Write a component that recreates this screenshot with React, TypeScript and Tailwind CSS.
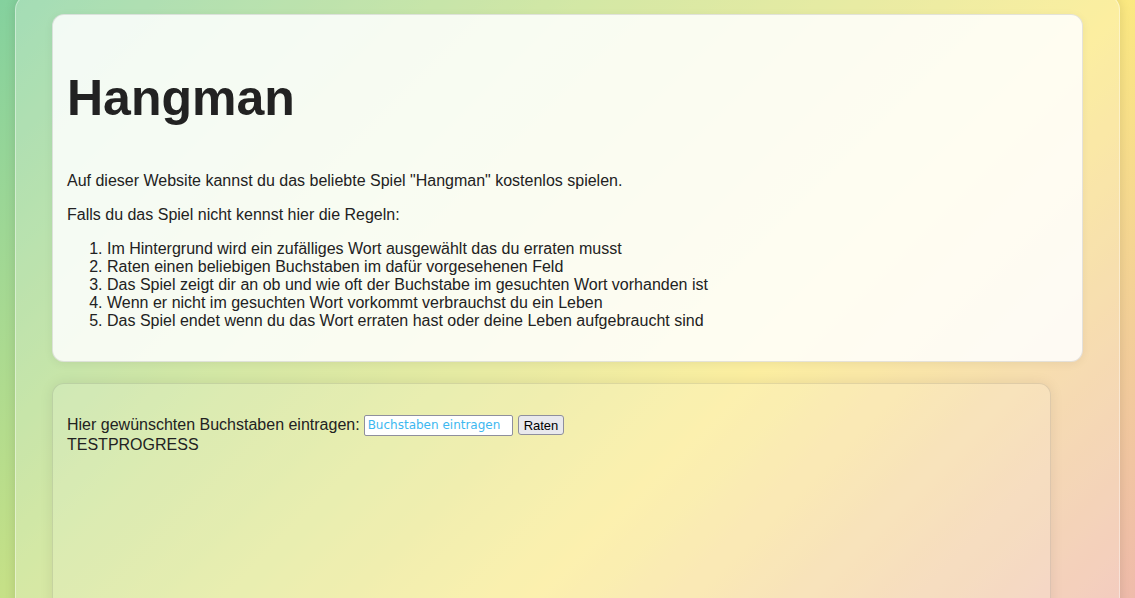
export default function App() {
  const rules = [
    "Im Hintergrund wird ein zufälliges Wort ausgewählt das du erraten musst",
    "Raten einen beliebigen Buchstaben im dafür vorgesehenen Feld",
    "Das Spiel zeigt dir an ob und wie oft der Buchstabe im gesuchten Wort vorhanden ist",
    "Wenn er nicht im gesuchten Wort vorkommt verbrauchst du ein Leben",
    "Das Spiel endet wenn du das Wort erraten hast oder deine Leben aufgebraucht sind",
  ];

  return (
    <div className="h-[598px] w-full overflow-hidden bg-[linear-gradient(135deg,#84d19e_0%,#c5e087_34%,#fbe981_65%,#f3cf98_84%,#efbbab_100%)] font-['Liberation_Sans',Arial,sans-serif] text-[16px] text-[#222]">
      {/* page frame */}
      <div className="mx-[15px] -mt-[6px] h-[700px] rounded-t-2xl border border-white/40 bg-white/25 px-[36px] pt-[19px] shadow-[0_0_12px_rgba(0,0,0,0.12)]">
        {/* intro card */}
        <section className="rounded-xl border border-black/10 bg-white/85 px-[14px] pb-[15px] pt-[15px] shadow-[0_2px_10px_rgba(0,0,0,0.06)]">
          <h1 className="mt-[40px] mb-[46px] text-[50px] font-bold leading-[56px] text-[#222]">Hangman</h1>
          <p className="my-[16px] leading-[18px]">
            Auf dieser Website kannst du das beliebte Spiel "Hangman" kostenlos spielen.
          </p>
          <p className="my-[16px] leading-[18px]">Falls du das Spiel nicht kennst hier die Regeln:</p>
          <ol className="mt-[16px] mb-[16px] list-decimal pl-[40px] leading-[18px]">
            {rules.map((r) => (
              <li key={r}>{r}</li>
            ))}
          </ol>
        </section>

        {/* game card */}
        <section className="mt-[21px] mr-[32px] h-[400px] rounded-xl border border-black/10 bg-white/15 px-[14px] pt-[30px] shadow-[0_0_14px_rgba(0,0,0,0.08)]">
          <div className="flex h-[22px] items-center">
            <span>Hier gewünschten Buchstaben eintragen:</span>
            <input
              type="text"
              placeholder="Buchstaben eintragen"
              className="ml-[4px] h-[21px] w-[149px] rounded-[2px] border border-[#8f8f9d] bg-white px-[3px] text-[12px] text-black placeholder:text-[#3db8f0] font-['DejaVu_Sans',sans-serif] outline-none"
            />
            <button className="ml-[5px] h-[20px] rounded-[3px] border border-[#8f8f9d] bg-[#e9e9ed] px-[5px] text-[13px] leading-none text-black">
              Raten
            </button>
          </div>
          <div className="leading-[18px]">TESTPROGRESS</div>
        </section>
      </div>
    </div>
  );
}
